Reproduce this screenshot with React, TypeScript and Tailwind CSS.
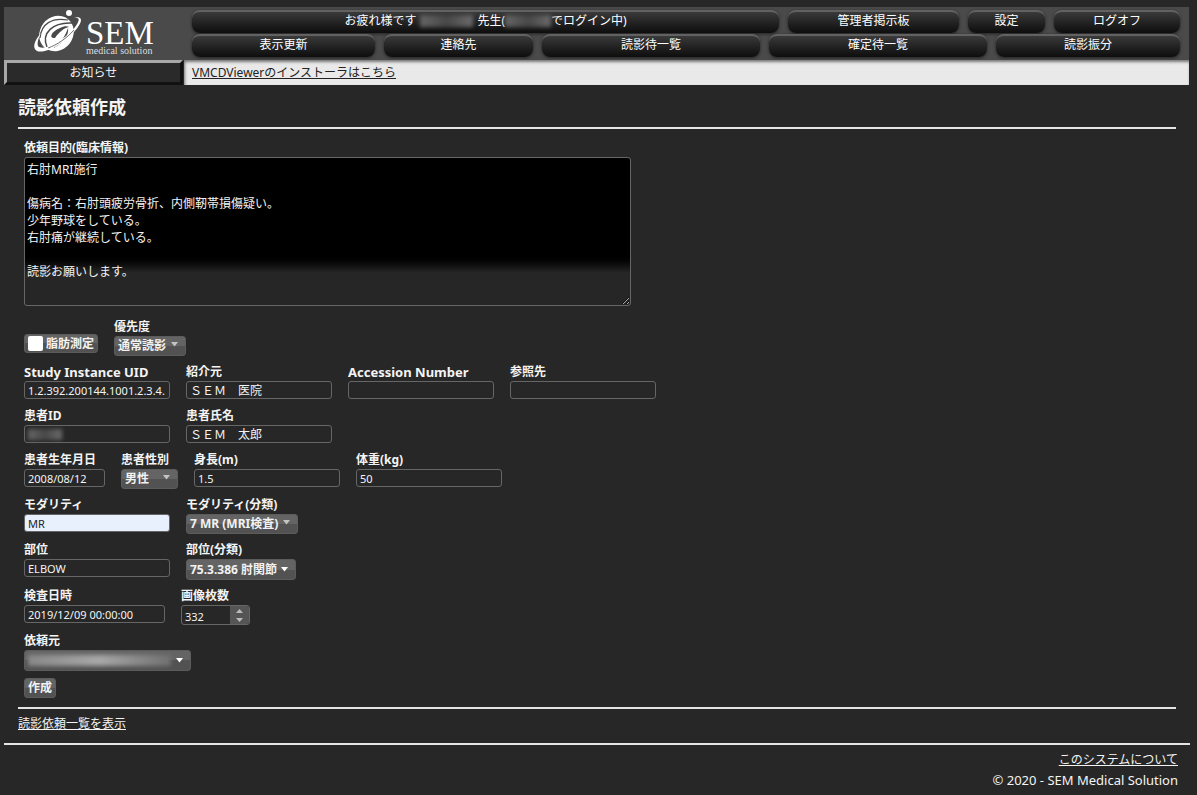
import { useState } from 'react';
import type { InputHTMLAttributes, ReactNode } from 'react';
import { clsx } from 'clsx';

const headerRows = [
  {
    cols: 'grid-cols-[171fr_77fr_126fr]',
    items: ['管理者掲示板', '設定', 'ログオフ'],
  },
  {
    cols: 'grid-cols-[183fr_149fr_218fr_218fr_184fr]',
    items: ['表示更新', '連絡先', '読影待一覧', '確定待一覧', '読影振分'],
  },
];

const clinicalInfo = `右肘MRI施行

傷病名：右肘頭疲労骨折、内側靭帯損傷疑い。
少年野球をしている。
右肘痛が継続している。

読影お願いします。`;

const headerItem =
  'flex h-[23px] items-center justify-center rounded-lg border-t-2 border-[#626262] bg-linear-to-b from-[#3a3a3a] to-[#0e0e0e] pb-1 text-xs text-white shadow-[0_1px_3px_#222]';

const raised =
  'rounded-[3px] border border-[#5c5c5c] bg-linear-to-b from-[#646464] from-50% to-[#525252] to-50% text-xs font-bold text-[#f2f2f2]';

function Logo() {
  return (
    <div className="flex w-[181px] shrink-0 items-end pb-1 pl-[26px]">
      <svg className="h-[50px] w-[60px]" viewBox="0 0 60 50" aria-hidden="true">
        <ellipse cx="26.5" cy="27.5" rx="18.5" ry="16.5" transform="rotate(-52 26.5 27.5)" fill="#fff" />
        <path d="M10 32C11 18 22 11 38 14" fill="none" stroke="#4a4a4a" strokeWidth="1.2" />
        <path d="M17 41C11 27 23 16 42 17" fill="none" stroke="#4a4a4a" strokeWidth="1.5" />
        <path d="M25 32C19 33 20 26 30 22C34 20 37 20 39 21C34 22 29 26 25 32Z" fill="#4a4a4a" />
        <path d="M23 42C35 37 39 28 38 22C35 30 32 36 23 42Z" fill="#4a4a4a" />
        <path
          d="M11 27C4 35 2 42 7 45C12 47 21 44 33 36C45 27 53 16 50.500 12.500C49 10.500 46 11 43 12C47 11.500 49.500 12 48.500 15C46 22 38 29 28 36C19 42 10 43 8 40C7 37 8 33 11 27Z"
          fill="#fff"
        />
        <path d="M18 42C27 39 37 32 44 24" fill="none" stroke="#4a4a4a" strokeWidth="0.8" />
        <circle cx="39" cy="7" r="3" fill="#fff" />
      </svg>
      <div className="-ml-1 flex flex-col font-['Liberation_Serif',serif] text-white">
        <span className="text-[33px] leading-[26px]">SEM</span>
        <span className="text-[10px] leading-[10px] text-[#dddddd]">medical solution</span>
      </div>
    </div>
  );
}

function Redacted({ className }: { className?: string }) {
  return (
    <span
      aria-hidden="true"
      className={clsx(
        'inline-block bg-linear-to-r from-[#666] via-[#484848] to-[#6a6a6a] blur-[2px]',
        className,
      )}
    />
  );
}

interface FieldProps {
  id: string;
  label: string;
  latin?: boolean;
  children: ReactNode;
}

function Field({ id, label, latin, children }: FieldProps) {
  return (
    <div className="flex flex-col">
      <label
        htmlFor={id}
        className={clsx('h-[18px] leading-[18px] font-bold whitespace-nowrap', latin ? 'text-[13px]' : 'text-xs')}
      >
        {label}
      </label>
      <div className="relative min-h-[19px]">{children}</div>
    </div>
  );
}

function TextInput({ className, ...props }: InputHTMLAttributes<HTMLInputElement>) {
  return (
    <input
      type="text"
      className={clsx(
        'block h-[18px] rounded-[3px] border border-[#666] px-[3px] leading-4',
        className,
      )}
      {...props}
    />
  );
}

interface SelectProps {
  id: string;
  className: string;
  option: string;
  dim?: boolean;
}

function Select({ id, className, option, dim }: SelectProps) {
  return (
    <>
      <select id={id} className={clsx(raised, 'block appearance-none px-[3px]', className)}>
        <option>{option}</option>
      </select>
      <svg
        className={clsx('pointer-events-none absolute right-2 h-[5px] w-[7px]', dim ? 'top-[6px]' : 'top-2')}
        viewBox="0 0 7 5"
        aria-hidden="true"
      >
        <path d="M0 0H7L3.5 4.5Z" fill={dim ? '#c4c4c4' : '#fff'} />
      </svg>
    </>
  );
}

function Spinner() {
  const [count, setCount] = useState(332);
  const button = 'flex h-[9px] items-center justify-center';

  return (
    <div className="flex w-[69px] overflow-hidden rounded-[3px] border border-[#666]">
      <input
        id="count"
        type="text"
        value={count}
        onChange={(e) => setCount(Number(e.target.value) || 0)}
        className="h-[18px] w-12 px-[3px] pt-0.5 text-[11px]"
      />
      <div className="flex-1 bg-[#555]">
        <button type="button" aria-label="増やす" className={clsx(button, 'w-full')} onClick={() => setCount(count + 1)}>
          <svg className="h-1 w-[7px]" viewBox="0 0 7 4"><path d="M0 4H7L3.5 0Z" fill="#bbb" /></svg>
        </button>
        <button type="button" aria-label="減らす" className={clsx(button, 'w-full')} onClick={() => setCount(count - 1)}>
          <svg className="h-1 w-[7px]" viewBox="0 0 7 4"><path d="M0 0H7L3.5 4Z" fill="#bbb" /></svg>
        </button>
      </div>
    </div>
  );
}

function Header() {
  return (
    <header className="mr-2 ml-1">
      <div className="flex h-[53px] bg-[#4a4a4a]">
        <Logo />
        <nav className="flex flex-1 flex-col gap-px pt-[3px] pr-[9px] pl-[7px]">
          <div className="grid grid-cols-[587fr_392fr] gap-[9px]">
            <div className={headerItem}>
              お疲れ様です
              <Redacted className="mx-1 h-3 w-[53px]" />
              先生(
              <Redacted className="h-3 w-[46px]" />
              でログイン中)
            </div>
            <div className={clsx('grid gap-[9px]', headerRows[0].cols)}>
              {headerRows[0].items.map((item) => (
                <a key={item} href="#" className={headerItem}>{item}</a>
              ))}
            </div>
          </div>
          <div className={clsx('grid gap-[9px]', headerRows[1].cols)}>
            {headerRows[1].items.map((item) => (
              <a key={item} href="#" className={headerItem}>{item}</a>
            ))}
          </div>
        </nav>
      </div>

      <div className="flex h-[25px] text-xs">
        <div className="flex w-[179px] items-center justify-center border-3 border-t-[#a8a8a8] border-r-[#111] border-b-[#111] border-l-[#a8a8a8] bg-[#2a2a2a]">
          お知らせ
        </div>
        <div className="ml-px flex flex-1 items-center bg-[#e9e9e9] pl-2 text-[#222] shadow-[inset_1px_2px_3px_#777]">
          <a href="#" className="underline">VMCDViewerのインストーラはこちら</a>
        </div>
      </div>
    </header>
  );
}

export default function App() {
  return (
    <div className="min-h-screen bg-[#272727] pt-[7px] font-['Noto_Sans','Noto_Sans_CJK_JP',sans-serif] text-xs text-[#f4f4f4]">
      <Header />

      <main className="mr-[21px] ml-[18px]">
        <h1 className="pt-[10px] text-lg leading-6 font-bold">読影依頼作成</h1>
        <hr className="mt-2 border-t-2 border-b-0 border-[#e4e4e4]" />

        <form className="mt-[10px] flex flex-col gap-[7px] pl-[6px]" onSubmit={(e) => e.preventDefault()}>
          <div className="mb-[5px]">
            <Field id="purpose" label="依頼目的(臨床情報)">
              <textarea
                id="purpose"
                defaultValue={clinicalInfo}
                className="block h-[149px] w-[607px] rounded-[3px] border border-[#666] bg-linear-to-b from-black from-64% to-[#262626] to-78% px-0.5 py-[3px] leading-[17px]"
              />
            </Field>
          </div>

          <div className="flex items-end gap-4">
            <label className={clsx(raised, 'mb-[3px] flex h-[19px] items-center gap-[3px] px-[3px]')}>
              <input type="checkbox" className="size-[15px] appearance-none rounded-xs bg-white checked:bg-blue-500" />
              脂肪測定
            </label>
            <Field id="priority" label="優先度">
              <Select id="priority" className="h-5 w-[72px]" option="通常読影" dim />
            </Field>
          </div>

          <div className="flex gap-4">
            <Field id="uid" label="Study Instance UID" latin>
              <TextInput id="uid" className="w-[146px] text-[11px]" defaultValue="1.2.392.200144.1001.2.3.4." />
            </Field>
            <Field id="referrer" label="紹介元">
              <TextInput id="referrer" className="w-[146px]" defaultValue="ＳＥＭ　医院" />
            </Field>
            <Field id="accession" label="Accession Number" latin>
              <TextInput id="accession" className="w-[146px]" />
            </Field>
            <Field id="reference" label="参照先">
              <TextInput id="reference" className="w-[146px]" />
            </Field>
          </div>

          <div className="flex gap-4">
            <Field id="patientId" label="患者ID">
              <TextInput id="patientId" className="w-[146px]" />
              <Redacted className="absolute top-[4px] left-1 h-[11px] w-[34px]" />
            </Field>
            <Field id="patientName" label="患者氏名">
              <TextInput id="patientName" className="w-[146px]" defaultValue="ＳＥＭ　太郎" />
            </Field>
          </div>

          <div className="flex gap-4">
            <Field id="birthday" label="患者生年月日">
              <TextInput id="birthday" className="w-[81px] text-[11px]" defaultValue="2008/08/12" />
            </Field>
            <Field id="sex" label="患者性別">
              <Select id="sex" className="h-5 w-[57px]" option="男性" dim />
            </Field>
            <Field id="height" label="身長(m)">
              <TextInput id="height" className="w-[146px] text-[11px]" defaultValue="1.5" />
            </Field>
            <Field id="weight" label="体重(kg)">
              <TextInput id="weight" className="w-[146px] text-[11px]" defaultValue="50" />
            </Field>
          </div>

          <div className="flex gap-4">
            <Field id="modality" label="モダリティ">
              <TextInput id="modality" className="w-[146px] bg-[#e8f0fe] text-[11px] text-[#222]" defaultValue="MR" />
            </Field>
            <Field id="modalityClass" label="モダリティ(分類)">
              <Select id="modalityClass" className="h-5 w-[112px]" option="7 MR (MRI検査)" dim />
            </Field>
          </div>

          <div className="flex gap-4">
            <Field id="part" label="部位">
              <TextInput id="part" className="w-[146px] text-[11px]" defaultValue="ELBOW" />
            </Field>
            <Field id="partClass" label="部位(分類)">
              <Select id="partClass" className="h-[21px] w-[110px]" option="75.3.386 肘関節" />
            </Field>
          </div>

          <div className="flex gap-4">
            <Field id="examDate" label="検査日時">
              <TextInput id="examDate" className="w-[141px] text-[11px]" defaultValue="2019/12/09 00:00:00" />
            </Field>
            <Field id="count" label="画像枚数">
              <Spinner />
            </Field>
          </div>

          <div className="flex gap-4">
            <Field id="requester" label="依頼元">
              <Select id="requester" className="h-[21px] w-[167px]" option="" />
              <Redacted className="pointer-events-none absolute top-[5px] left-1 h-[11px] w-[143px] from-[#888] via-[#a8a8a8] to-[#707070]" />
            </Field>
          </div>

          <button type="submit" className={clsx(raised, 'h-5 self-start px-[3px] leading-4')}>
            作成
          </button>
        </form>

        <hr className="mt-[9px] border-t-2 border-b-0 border-[#e4e4e4]" />
        <a href="#" className="mt-[6px] inline-block leading-[18px] underline">読影依頼一覧を表示</a>
      </main>

      <footer className="mr-[7px] ml-1">
        <hr className="mt-[10px] border-t-2 border-b-0 border-[#e4e4e4]" />
        <div className="flex flex-col items-end pt-[5px] pr-3 leading-5">
          <a href="#" className="underline">このシステムについて</a>
          <p className="text-[13px]">© 2020 - SEM Medical Solution</p>
        </div>
      </footer>
    </div>
  );
}
